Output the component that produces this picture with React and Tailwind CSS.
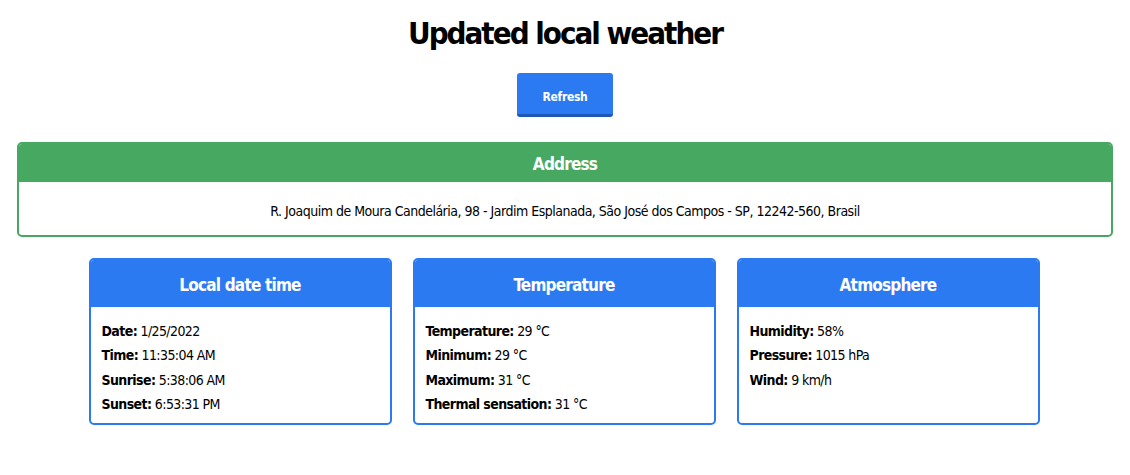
import React from 'react';

const font = { fontFamily: '"DejaVu Sans Condensed", "Liberation Sans Narrow", "Liberation Sans", sans-serif' };

const Card = ({ title, rows }) => (
  <div className="w-[303px] h-[167px] border-2 border-[#2b7af2] rounded-[5px] overflow-hidden bg-white">
    <div className="h-[47px] pt-[4px] bg-[#2b7af2] flex items-center justify-center text-white font-bold text-[17px] tracking-[-0.8px]">
      {title}
    </div>
    <div className="px-[11px] pt-[12px] text-[14px] leading-[24.4px] tracking-[-0.6px] text-black">
      {rows.map(([k, v]) => (
        <div key={k}>
          <span className="font-bold">{k}:</span> {v}
        </div>
      ))}
    </div>
  </div>
);

export default function App() {
  return (
    <div className="bg-white min-h-[475px] pt-[13px]" style={font}>
      <h1 className="text-center text-[31px] font-bold leading-[40px] tracking-[-2px] text-black">
        Updated local weather
      </h1>
      <div className="flex justify-center mt-[20px]">
        <button className="w-[96px] h-[44px] pt-[7px] bg-[#2b7af2] border-b-[3px] border-[#1d57b8] rounded-[3px] text-white font-bold text-[12px] tracking-[-0.3px]">
          Refresh
        </button>
      </div>
      <div className="mx-[17px] mt-[25px] border-2 border-[#47a862] rounded-[5px] overflow-hidden">
        <div className="h-[38px] pt-[4px] bg-[#47a862] flex items-center justify-center text-white font-bold text-[17px] tracking-[-0.8px]">
          Address
        </div>
        <div className="h-[53px] pt-[5px] flex items-center justify-center text-[14px] tracking-[-0.5px] text-black">
          R. Joaquim de Moura Candelária, 98 - Jardim Esplanada, São José dos Campos - SP, 12242-560, Brasil
        </div>
      </div>
      <div className="flex justify-center gap-[21px] mt-[21px] ml-[-2px]">
        <Card
          title="Local date time"
          rows={[
            ['Date', '1/25/2022'],
            ['Time', '11:35:04 AM'],
            ['Sunrise', '5:38:06 AM'],
            ['Sunset', '6:53:31 PM'],
          ]}
        />
        <Card
          title="Temperature"
          rows={[
            ['Temperature', '29 °C'],
            ['Minimum', '29 °C'],
            ['Maximum', '31 °C'],
            ['Thermal sensation', '31 °C'],
          ]}
        />
        <Card
          title="Atmosphere"
          rows={[
            ['Humidity', '58%'],
            ['Pressure', '1015 hPa'],
            ['Wind', '9 km/h'],
          ]}
        />
      </div>
    </div>
  );
}
